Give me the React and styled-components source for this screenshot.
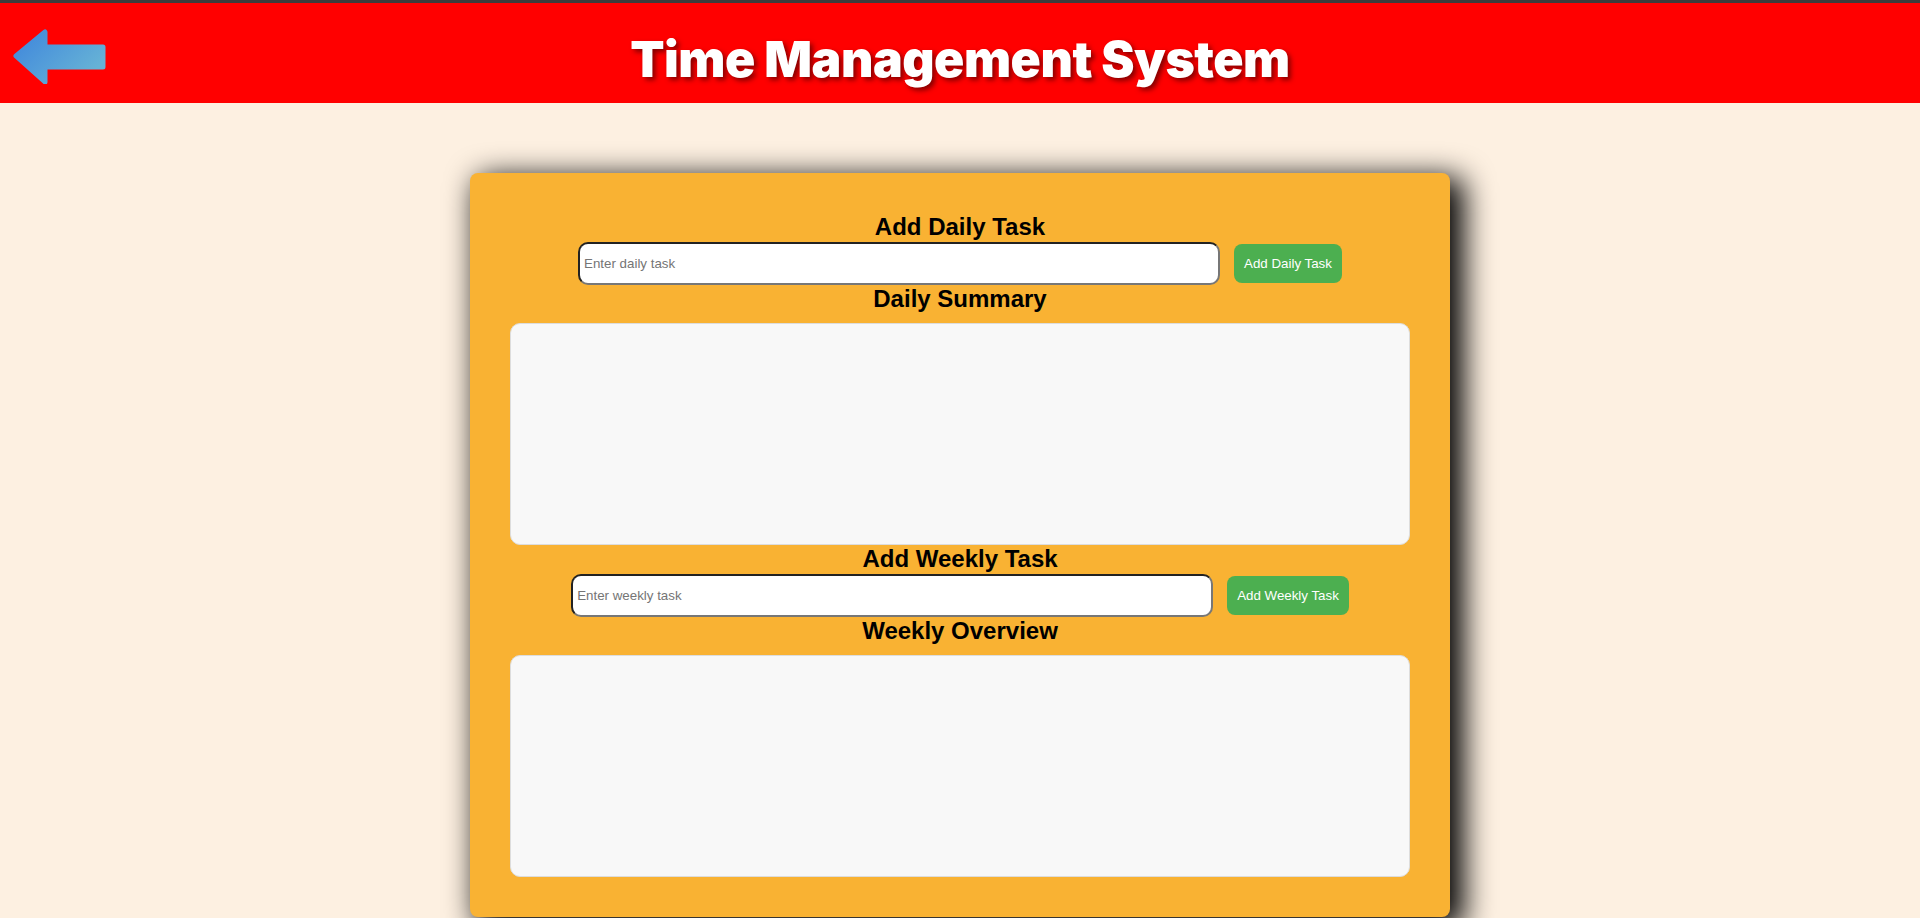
import React from "react";
import styled, { createGlobalStyle } from "styled-components";

const GlobalStyle = createGlobalStyle`
  html, body {
    margin: 0;
    padding: 0;
    background: #fdf0e1;
    font-family: "Liberation Sans", Arial, sans-serif;
  }
  * { box-sizing: border-box; }
`;

const Page = styled.div`
  min-height: 918px;
  background: #fdf0e1;
  display: flex;
  flex-direction: column;
  align-items: stretch;
`;

const Header = styled.header`
  position: relative;
  height: 103px;
  background: #ff0000;
  border-top: 3px solid #3c3c3c;
  display: flex;
  align-items: center;
  justify-content: center;
`;

const BackButton = styled.button`
  position: absolute;
  left: 10px;
  top: 17px;
  width: 100px;
  height: 64px;
  padding: 0;
  border: none;
  background: transparent;
  cursor: pointer;
  display: block;
`;

const Title = styled.h1`
  margin: 0;
  padding-top: 11px;
  font-family: Inter, "Noto Sans", sans-serif;
  font-weight: 900;
  font-size: 50px;
  letter-spacing: -0.5px;
  color: #ffffff;
  text-shadow: 3px 3px 5px rgba(80, 0, 0, 0.7);
`;

const Card = styled.main`
  width: 980px;
  margin: 70px auto 0;
  background: #f9b233;
  border-radius: 8px;
  padding: 40px;
  box-shadow: 10px 8px 30px 4px #000;
  display: flex;
  flex-direction: column;
  align-items: center;
`;

const Heading = styled.h2`
  margin: 0;
  font-family: "Liberation Sans", Arial, sans-serif;
  font-size: 24px;
  font-weight: 700;
  color: #000;
  line-height: 28.5px;
  text-align: center;
`;

const InputRow = styled.div`
  display: flex;
  align-items: center;
  justify-content: center;
  gap: 14px;
`;

const TaskInput = styled.input`
  width: 642px;
  height: 43px;
  padding: 12px 4px;
  border: 2px solid;
  border-color: #222 #777 #777 #222;
  border-radius: 10px;
  background: #fff;
  font-family: "Liberation Sans", Arial, sans-serif;
  font-size: 13.33px;
  color: #000;
  outline: none;
  &::placeholder { color: #757575; }
`;

const AddButton = styled.button`
  height: 39px;
  padding: 0 10px;
  border: none;
  border-radius: 8px;
  background: #4caf50;
  color: #fff;
  font-family: "Liberation Sans", Arial, sans-serif;
  font-size: 13.33px;
  cursor: pointer;
`;

const SummaryBox = styled.div`
  width: 900px;
  height: 222px;
  margin-top: 10px;
  background: #f8f8f8;
  border: 1px solid #dddddd;
  border-radius: 10px;
`;

const BackArrow = () => (
  <svg width="100" height="64" viewBox="0 0 100 64">
    <defs>
      <linearGradient id="arrowGrad" x1="0" y1="0" x2="1" y2="0.6">
        <stop offset="0" stopColor="#3f86dc" />
        <stop offset="1" stopColor="#66b2d6" />
      </linearGradient>
    </defs>
    <path
      d="M6 36 L35 12 L35 27 L93 27 L93 47 L35 47 L35 62 Z"
      fill="url(#arrowGrad)"
      stroke="url(#arrowGrad)"
      strokeWidth="5"
      strokeLinejoin="round"
    />
  </svg>
);

const TaskSection = ({ title, placeholder, button, summary }) => (
  <>
    <Heading>{title}</Heading>
    <InputRow>
      <TaskInput placeholder={placeholder} />
      <AddButton>{button}</AddButton>
    </InputRow>
    <Heading>{summary}</Heading>
    <SummaryBox />
  </>
);

export default function App() {
  return (
    <Page>
      <GlobalStyle />
      <Header>
        <BackButton aria-label="Back">
          <BackArrow />
        </BackButton>
        <Title>Time Management System</Title>
      </Header>
      <Card>
        <TaskSection
          title="Add Daily Task"
          placeholder="Enter daily task"
          button="Add Daily Task"
          summary="Daily Summary"
        />
        <TaskSection
          title="Add Weekly Task"
          placeholder="Enter weekly task"
          button="Add Weekly Task"
          summary="Weekly Overview"
        />
      </Card>
    </Page>
  );
}
